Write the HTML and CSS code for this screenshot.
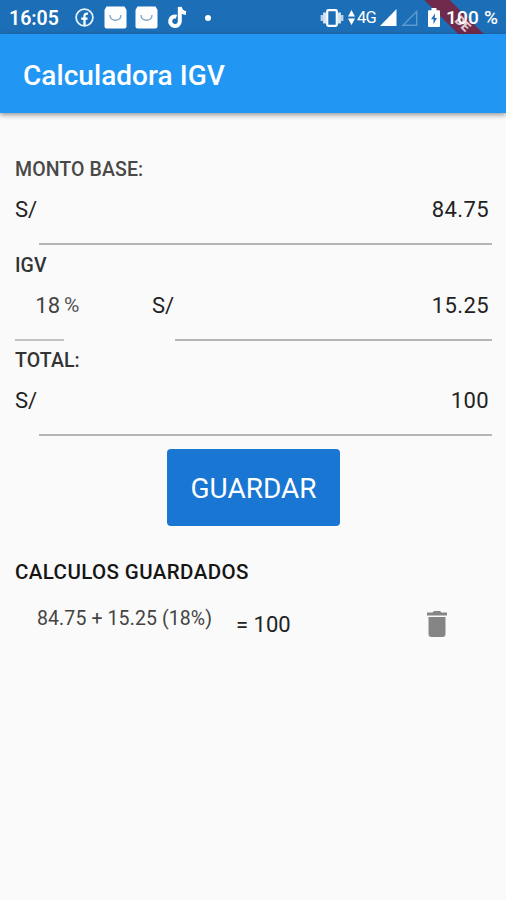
FILE: index.html
```html
<!DOCTYPE html>
<html lang="es">
<head>
  <meta charset="utf-8">
  <title>Calculadora IGV</title>
  <link rel="stylesheet" href="styles.css">
</head>
<body>
  <div class="status-bar">
    <div class="ribbon"><span>DE</span></div>
    <div class="status-left">
      <span class="clock">16:05</span>
      <svg class="fb" width="19" height="19" viewBox="0 0 19 19">
        <circle cx="9.5" cy="9.5" r="8.4" fill="none" stroke="#e3f1ff" stroke-width="1.8"/>
        <path d="M9.5 17.5V8.2q0-3 3.6-2.6M6.2 10.6h6.3" fill="none" stroke="#fff" stroke-width="2.3"/>
      </svg>
      <svg class="bag" width="23" height="23" viewBox="0 0 23 23">
        <path d="M2.5 0.5h18L22.5 4v16.5a2 2 0 0 1-2 2h-18a2 2 0 0 1-2-2V4z" fill="#fff"/>
        <path d="M6 9c0 7 11 7 11 0" fill="none" stroke="#7fa5c8" stroke-width="1.4"/>
      </svg>
      <svg class="bag" width="23" height="23" viewBox="0 0 23 23">
        <path d="M2.5 0.5h18L22.5 4v16.5a2 2 0 0 1-2 2h-18a2 2 0 0 1-2-2V4z" fill="#fff"/>
        <path d="M6 9c0 7 11 7 11 0" fill="none" stroke="#7fa5c8" stroke-width="1.4"/>
      </svg>
      <svg class="tiktok" width="20" height="23" viewBox="0 0 20 23">
        <path d="M9.5 10.7a4.8 4.8 0 1 0 3.3 4.8V1c.5 3.5 2.7 5.7 6.2 6" fill="none" stroke="#fff" stroke-width="4"/>
      </svg>
      <span class="dot"></span>
    </div>
    <div class="status-right">
      <svg width="24" height="18" viewBox="0 0 24 18">
        <rect x="7.2" y="1.2" width="9.6" height="15.6" rx="1" fill="none" stroke="#fff" stroke-width="2.2"/>
        <path d="M4.6 3.5v11M19.4 3.5v11" stroke="#d6e6f6" stroke-width="3"/>
        <path d="M1.8 6v6M22.2 6v6" stroke="#b8d3ec" stroke-width="2.4"/>
      </svg>
      <svg class="arrows" width="7" height="15" viewBox="0 0 7 15">
        <path d="M3.5 0L7 6.5H0zM3.5 15L0 8.5h7z" fill="#fff"/>
      </svg>
      <span class="net">4G</span>
      <svg class="signal" width="17" height="17" viewBox="0 0 17 17">
        <path d="M16.5 0v17H0z" fill="#fff"/>
      </svg>
      <svg class="signal-off" width="17" height="17" viewBox="0 0 17 17">
        <path d="M15.7 2.5v13.7H2z" fill="none" stroke="#5c9bd2" stroke-width="1.4"/>
      </svg>
      <svg class="battery" width="12" height="19" viewBox="0 0 12 19">
        <path d="M3.5 0h5v2.2H11a1 1 0 0 1 1 1V18a1 1 0 0 1-1 1H1a1 1 0 0 1-1-1V3.2a1 1 0 0 1 1-1h2.5z" fill="#fff"/>
        <path d="M7 5.5L3 11.2h2.5V16L9 10H6.8z" fill="#1c6db5"/>
      </svg>
      <span class="percent">100 %</span>
    </div>
  </div>

  <header class="app-bar">
    <h1>Calculadora IGV</h1>
  </header>

  <main>
    <section class="field">
      <h2 class="muted">MONTO BASE:</h2>
      <div class="row">
        <span class="currency">S/</span>
        <div class="value">84.75</div>
      </div>
    </section>

    <section class="field">
      <h2>IGV</h2>
      <div class="row">
        <div class="rate">18</div>
        <span class="rate-sign">%</span>
        <span class="currency">S/</span>
        <div class="value">15.25</div>
      </div>
    </section>

    <section class="field">
      <h2>TOTAL:</h2>
      <div class="row">
        <span class="currency">S/</span>
        <div class="value">100</div>
      </div>
    </section>

    <button class="save">GUARDAR</button>

    <h2 class="saved-title">CALCULOS GUARDADOS</h2>
    <div class="saved-item">
      <span class="detail">84.75 + 15.25 (18%)</span>
      <span class="result">= 100</span>
      <svg class="trash" width="20" height="26" viewBox="0 0 20 26">
        <path d="M0 1.5h5.5L7 0h6l1.5 1.5H20v3H0zM1.5 6h17v17a3 3 0 0 1-3 3h-11a3 3 0 0 1-3-3z" fill="#858585"/>
      </svg>
    </div>
  </main>
</body>
</html>
```
FILE: styles.css
```css
* {
  box-sizing: border-box;
}
body {
  margin: 0;
  height: 900px;
  background-color: #fafafa;
  font-family: Roboto, sans-serif;
  color: #222;
  overflow: hidden;
}
h1, h2 {
  margin: 0;
  font-weight: 500;
}
svg {
  display: block;
  flex: none;
}
.status-bar {
  position: relative;
  height: 34px;
  padding: 0 8px 0 9px;
  display: flex;
  justify-content: space-between;
  background-color: #1c6eb6;
  color: #fff;
  overflow: hidden;
}
.status-left,
.status-right {
  position: relative;
  display: flex;
  align-items: center;
  height: 35px;
  white-space: nowrap;
}
.clock {
  width: 51px;
  padding-top: 1px;
  font-size: 19.5px;
  font-weight: 600;
}
.fb {
  margin-left: 15px;
}
.bag {
  margin-left: 10px;
}
.bag + .bag {
  margin-left: 8px;
}
.tiktok {
  margin-left: 9px;
}
.dot {
  width: 6px;
  height: 6px;
  margin-left: 18px;
  border-radius: 50%;
  background-color: #fff;
}
.arrows {
  margin-left: 4px;
}
.net {
  width: 19px;
  margin-left: 2px;
  font-size: 16.5px;
  letter-spacing: -0.8px;
}
.signal {
  margin-left: 4px;
}
.signal-off {
  margin-left: 4px;
}
.battery {
  margin-left: 10px;
}
.percent {
  width: 52px;
  margin-left: 6px;
  font-size: 19px;
  font-weight: 500;
  letter-spacing: 0.2px;
}
/* corner ribbon, mostly hidden behind the status icons */
.ribbon {
  position: absolute;
  right: -28px;
  top: 8px;
  width: 160px;
  height: 18px;
  padding-left: 83px;
  background-color: #702a4b;
  transform: rotate(45deg);
  font-size: 13px;
  font-weight: 900;
  line-height: 15px;
  color: #e0c9cf;
}
.app-bar {
  position: relative;
  height: 79px;
  padding: 4px 0 0 23px;
  display: flex;
  align-items: center;
  background-color: #2196f3;
  color: #fff;
  box-shadow: 0 2px 5px rgba(0, 0, 0, 0.4);
}
.app-bar h1 {
  font-size: 28px;
  line-height: 32px;
  letter-spacing: 0.05px;
}
main {
  padding: 45px 14px 0 15px;
}
.field {
  height: 95.7px;
}
.field h2 {
  height: 23px;
  font-size: 19.5px;
  line-height: 23px;
  letter-spacing: 0.1px;
  color: #333;
}
.field h2.muted {
  color: #484848;
}
.row {
  display: flex;
  height: 64px;
  font-size: 22px;
  line-height: 57px;
}
.currency {
  width: 24px;
}
.value {
  flex: 1;
  padding-right: 3px;
  border-bottom: 2px solid #b5b5b5;
  text-align: right;
  letter-spacing: 0.4px;
}
.rate {
  width: 49px;
  padding-right: 4px;
  border-bottom: 2px solid #c4c4c4;
  text-align: right;
  color: #444;
}
.rate-sign {
  width: 88px;
  font-size: 21px;
  color: #555;
}
.rate-sign + .currency {
  width: 23px;
}
.save {
  display: block;
  width: 173px;
  height: 77px;
  margin: 4px auto 0 152px;
  padding: 2px 0 0;
  border: none;
  border-radius: 4px;
  background-color: #1976d2;
  color: #fff;
  font-family: inherit;
  font-size: 28px;
}
.saved-title {
  margin-top: 34px;
  font-size: 20.5px;
  line-height: 24px;
  letter-spacing: 0.4px;
  color: #151515;
}
.saved-item {
  display: flex;
  align-items: flex-start;
  padding: 22px 45px 0 22px;
  white-space: nowrap;
}
.detail {
  width: 199px;
  font-size: 19.5px;
  line-height: 26px;
  letter-spacing: 0.1px;
  color: #444;
}
.result {
  font-size: 22px;
  line-height: 37px;
}
.trash {
  margin: 5px 0 0 auto;
}
```
